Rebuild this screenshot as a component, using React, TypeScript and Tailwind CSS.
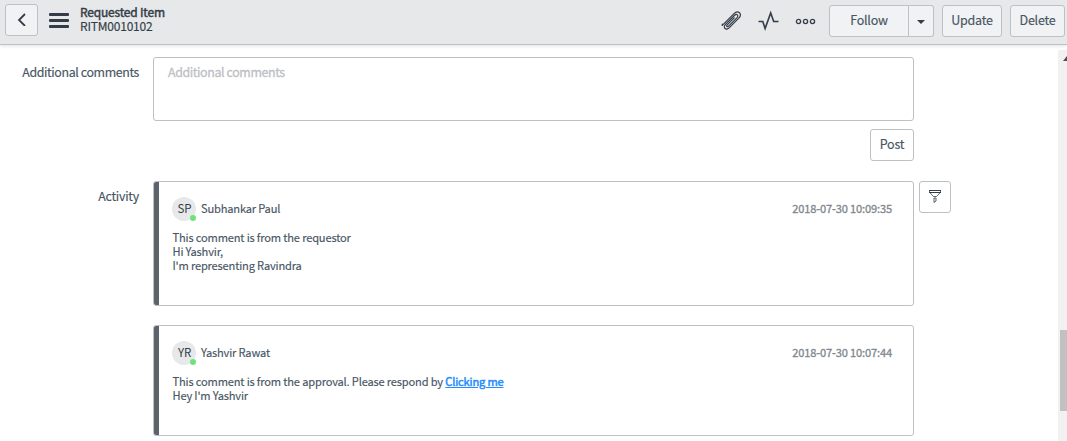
import type { ReactNode } from "react";

function ToolButton({ children, className }: { children: ReactNode; className: string }) {
  return (
    <button
      className={`flex h-8 shrink-0 items-center justify-center rounded-[3px] border border-[#bdc0c4] pb-[2px] text-[12.5px] leading-4 tracking-[-0.25px] text-[#485563] ${className}`}
    >
      {children}
    </button>
  );
}

function PaperclipIcon() {
  return (
    <svg width="22" height="22" viewBox="0 0 22 22" fill="none" stroke="#343d47" strokeWidth="1.2" strokeLinecap="round" strokeLinejoin="round">
      <path d="M2.300 15.300 14 3.600C15.800 1.800 18 1.300 19.500 2.700s1.100 3.700-.7 5.500L9.400 17.600c-1.600 1.600-3.300 2-4.400.9s-.8-2.800.7-4.300l8.700-8.700c1.100-1.100 2.300-1.300 3-.6s.5 1.900-.6 3L8.600 16.100c-.7.7-1.300.7-1.700.4s-.3-1 .3-1.600l7-7" />
      <path d="M2.300 15.300v-1.300" />
    </svg>
  );
}

function PulseIcon() {
  return (
    <svg width="22" height="22" viewBox="0 0 22 22" fill="none" stroke="#343d47" strokeWidth="1.6" strokeLinejoin="miter">
      <path d="M1.500 11.500h4.300l2.300 7 5.600-15.500 3 8.500h4.800" />
    </svg>
  );
}

function MoreIcon() {
  return (
    <svg width="22" height="8" viewBox="0 0 22 8" fill="none" stroke="#343d47" strokeWidth="1.3">
      <circle cx="3.500" cy="4.500" r="2.100" />
      <circle cx="10.500" cy="4.500" r="2.100" />
      <circle cx="17.500" cy="4.500" r="2.100" />
    </svg>
  );
}

function FilterIcon() {
  return (
    <svg width="14" height="14" viewBox="0 0 14 14" fill="none" stroke="#343d47">
      <path d="M1 1.500h12M1 3.500h12" strokeWidth="1" />
      <path d="M1.500 1v3M12.500 1v3" strokeWidth=".8" />
      <path d="M2.200 4 5.500 7.500h3L11.800 4" strokeWidth=".8" />
      <path d="M6 9h2v3l-2 1.500z" strokeWidth=".8" />
    </svg>
  );
}

function Entry({
  initials,
  name,
  time,
  className,
  children,
}: {
  initials: string;
  name: string;
  time: string;
  className: string;
  children: ReactNode;
}) {
  return (
    <article
      className={`flex w-[761px] flex-col overflow-hidden rounded-[3px] border border-[#bdc0c4] text-[11.1px] leading-[14px] tracking-[-0.17px] text-[#485563] ${className}`}
    >
      <div className="flex min-h-0 flex-1">
        <div className="w-[5px] shrink-0 bg-[#5b636b]" />
        <div className="flex-1 pl-[13px] pr-[21px] pt-[15px]">
          <header className="flex h-6 items-center">
            <span className="relative flex size-6 items-center justify-center rounded-full bg-[#e6e8ea] pb-[2px] pl-px text-[11.5px] text-[#343d47] [-webkit-text-stroke:0px]">
              {initials}
              <span className="absolute bottom-0 right-0 size-1.5 rounded-full bg-[#71e279]" />
            </span>
            <span className="ml-[5px] pb-[2px]">{name}</span>
            <time className="ml-auto pb-[2px] tracking-[-0.15px] text-[#81878e] [-webkit-text-stroke:0.3px_#81878e]">{time}</time>
          </header>
          <div className="ml-[0.500px] mt-[9px]">{children}</div>
        </div>
      </div>
    </article>
  );
}

export default function App() {
  return (
    <div className="flex h-[441px] w-[1067px] flex-col overflow-hidden bg-white font-['Noto_Sans_CJK_SC',sans-serif] text-[#485563] [-webkit-text-stroke:0.15px]">
      <header className="z-10 flex h-[45px] shrink-0 items-start border-b border-[#bdc0c4] bg-[#e6e8ea] pl-[5px] pr-[2px] pt-[5px] shadow-[0_1px_4px_rgba(0,0,0,0.12)]">
        <ToolButton className="mt-[-1px] w-[33px] bg-[#f1f2f4]">
          <svg width="10" height="14" viewBox="0 0 10 14" fill="none" stroke="#343d47" strokeWidth="1.8">
            <path d="M8 2 2 8l6 6" />
          </svg>
        </ToolButton>
        <svg className="ml-[11px] mt-[7px]" width="20" height="16" viewBox="0 0 20 16" fill="#343d47">
          <rect y="1" width="20" height="3" rx="1" />
          <rect y="7" width="20" height="3" rx="1" />
          <rect y="13" width="20" height="3" rx="1" />
        </svg>
        <div className="ml-[11px] text-[12px] leading-[14px] text-[#343d47]">
          <h1 className="tracking-[-0.2px] [-webkit-text-stroke:0.45px]">Requested Item</h1>
          <p className="tracking-[-0.2px]">RITM0010102</p>
        </div>
        <div className="ml-auto flex items-start">
          <div className="flex h-8 items-center">
            <PaperclipIcon />
            <div className="ml-[15px]">
              <PulseIcon />
            </div>
            <div className="ml-[16px]">
              <MoreIcon />
            </div>
          </div>
          <ToolButton className="ml-[12px] w-[80px] rounded-r-none bg-[#f1f2f4]">Follow</ToolButton>
          <ToolButton className="w-[25px] rounded-l-none border-l-0 bg-[#f1f2f4]">
            <svg className="mt-[3px]" width="8" height="4" viewBox="0 0 8 4" fill="#343d47">
              <path d="M0 0h8L4 4z" />
            </svg>
          </ToolButton>
          <ToolButton className="ml-2 w-[60px] bg-[#f1f2f4]">Update</ToolButton>
          <ToolButton className="ml-2 w-[55px] bg-[#f1f2f4]">Delete</ToolButton>
        </div>
      </header>

      <div className="flex min-h-0 flex-1">
        <main className="flex-1 pt-[12px]">
          <div className="flex">
            <label className="w-[139px] whitespace-nowrap pt-[7px] text-right text-[12.4px] leading-4 tracking-[-0.38px]">
              Additional comments
            </label>
            <div className="ml-[14px] h-[64px] w-[761px] rounded-[3px] border border-[#bdc0c4] px-[14px] pt-[6px] text-[12.4px] leading-4 tracking-[-0.38px] text-[#bdc0c4] [-webkit-text-stroke:0.3px]">
              Additional comments
            </div>
          </div>
          <div className="ml-[870px] mt-2">
            <ToolButton className="w-[44px] bg-white">Post</ToolButton>
          </div>
          <div className="mt-5 flex items-start">
            <div className="w-[139px] pt-[7px] text-right text-[12.4px] leading-4 tracking-[-0.25px]">Activity</div>
            <div className="ml-[14px]">
              <Entry initials="SP" name="Subhankar Paul" time="2018-07-30 10:09:35" className="h-[125px]">
                <p>This comment is from the requestor</p>
                <p>Hi Yashvir,</p>
                <p>I'm representing Ravindra</p>
              </Entry>
              <Entry initials="YR" name="Yashvir Rawat" time="2018-07-30 10:07:44" className="mt-[19px] h-[111px]">
                <p>
                  This comment is from the approval. Please respond by{" "}
                  <a className="text-[#278efc] underline [-webkit-text-stroke:0.5px]">Clicking me</a>
                </p>
                <p>Hey I'm Yashvir</p>
              </Entry>
            </div>
            <ToolButton className="ml-[5px] w-8 bg-white">
              <FilterIcon />
            </ToolButton>
          </div>
        </main>
        <aside className="mt-[5px] w-[9px] overflow-hidden bg-[#f1f1f1]">
          <svg className="ml-[5px] mt-[6px]" width="8" height="5" viewBox="0 0 8 5" fill="#505050">
            <path d="M4 0l4 5H0z" />
          </svg>
          <div className="ml-[2px] mt-[269px] h-[81px] bg-[#c1c1c1]" />
        </aside>
      </div>
    </div>
  );
}
